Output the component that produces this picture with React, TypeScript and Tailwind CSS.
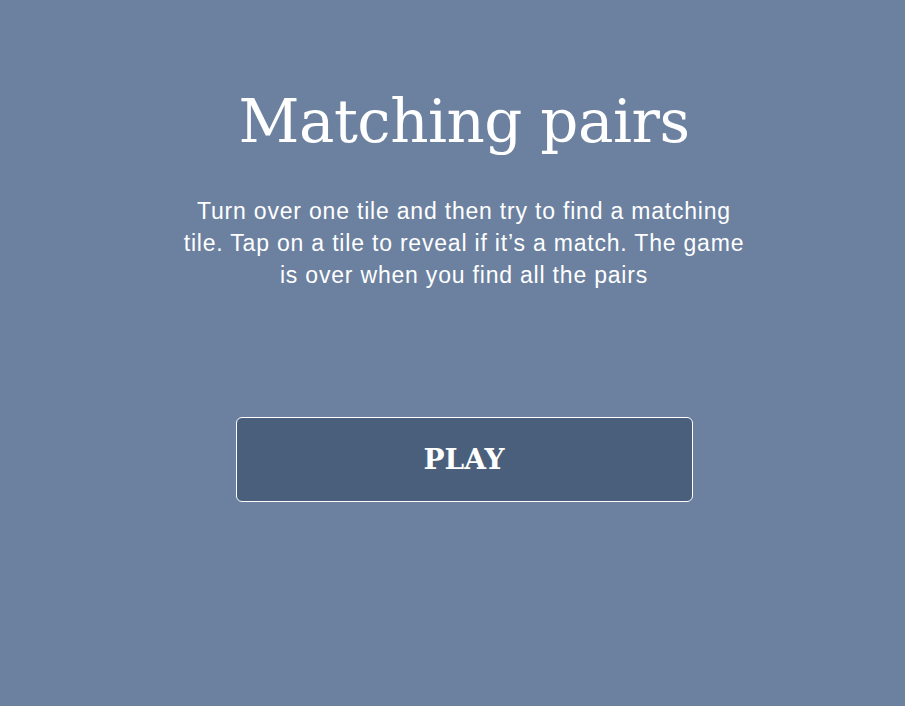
export default function App() {
  return (
    <div className="min-h-[706px] w-full bg-[#6b819f] pl-[23px] text-white">
      <div className="mx-auto flex w-[566px] flex-col items-center pt-[83px]">
        <h1 className="font-['Georgia','DejaVu_Serif',serif] text-[59.5px] leading-[78px] tracking-[-0.5px]">
          Matching pairs
        </h1>
        <p className="mt-[34px] text-center font-['Liberation_Sans',Arial,sans-serif] text-[23px] leading-[32px] tracking-[0.8px]">
          Turn over one tile and then try to find a matching tile. Tap on a tile to reveal if it’s a match. The game is
          over when you find all the pairs
        </p>
        <button className="mt-[126px] h-[85px] w-[457px] rounded-[6px] border border-white bg-[#4a5f7c] font-['Georgia','DejaVu_Serif',serif] text-[28px] font-bold text-white">
          PLAY
        </button>
      </div>
    </div>
  )
}
